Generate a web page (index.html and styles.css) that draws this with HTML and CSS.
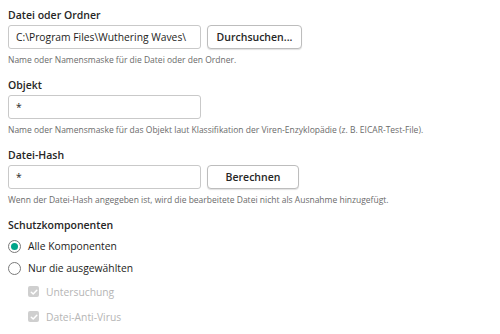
FILE: index.html
```html
<!DOCTYPE html>
<html lang="de">

<head>
    <meta charset="UTF-8">
    <meta name="viewport" content="width=device-width, initial-scale=1.0">
    <title>Ausnahme</title>
    <link rel="stylesheet" href="styles.css">
</head>

<body>
    <div class="field">
        <label class="field-label">Datei oder Ordner</label>
        <div class="field-row">
            <input class="text-input" type="text" value="C:\Program Files\Wuthering Waves\">
            <button class="btn">Durchsuchen...</button>
        </div>
        <p class="hint">Name oder Namensmaske für die Datei oder den Ordner.</p>
    </div>

    <div class="field">
        <label class="field-label">Objekt</label>
        <div class="field-row">
            <input class="text-input" type="text" value="*">
        </div>
        <p class="hint">Name oder Namensmaske für das Objekt laut Klassifikation der Viren-Enzyklopädie (z. B. EICAR-Test-File).</p>
    </div>

    <div class="field">
        <label class="field-label">Datei-Hash</label>
        <div class="field-row">
            <input class="text-input" type="text" value="*">
            <button class="btn btn-narrow">Berechnen</button>
        </div>
        <p class="hint">Wenn der Datei-Hash angegeben ist, wird die bearbeitete Datei nicht als Ausnahme hinzugefügt.</p>
    </div>

    <div class="components">
        <div class="field-label">Schutzkomponenten</div>
        <label class="option">
            <span class="radio checked"></span>
            Alle Komponenten
        </label>
        <label class="option">
            <span class="radio"></span>
            Nur die ausgewählten
        </label>
        <div class="sub-options">
            <label class="option disabled">
                <span class="checkbox">
                    <svg width="8" height="8" viewBox="0 0 8 8">
                        <path d="M1.3 4.2 L3.2 6 L6.8 2.2" fill="none" stroke="#fff" stroke-width="1.5" stroke-linecap="round" stroke-linejoin="round" />
                    </svg>
                </span>
                Untersuchung
            </label>
            <label class="option disabled">
                <span class="checkbox">
                    <svg width="8" height="8" viewBox="0 0 8 8">
                        <path d="M1.3 4.2 L3.2 6 L6.8 2.2" fill="none" stroke="#fff" stroke-width="1.5" stroke-linecap="round" stroke-linejoin="round" />
                    </svg>
                </span>
                Datei-Anti-Virus
            </label>
        </div>
    </div>
</body>

</html>
```

FILE: styles.css
```css
body {
    font-family: "Open Sans", "Noto Sans", sans-serif;
    background-color: #ffffff;
    color: #1d1d1b;
    margin: 0;
    padding: 8px 8px 0 8px;
}

.field {
    margin-bottom: 12px;
}

.field-label {
    display: block;
    font-size: 10.5px;
    font-weight: 600;
    color: #262626;
    line-height: 14px;
    margin-bottom: 3px;
}

.field-row {
    display: flex;
    gap: 6px;
    align-items: center;
}

.text-input {
    box-sizing: border-box;
    width: 193px;
    height: 24px;
    margin: 0;
    padding: 0 7px;
    border: 1px solid #c9c9c9;
    border-radius: 3px;
    font-family: inherit;
    font-size: 10.3px;
    color: #1d1d1b;
    background: #fff;
    outline: none;
}

.btn {
    box-sizing: border-box;
    height: 24px;
    width: 95px;
    padding: 0;
    border: 1px solid #bdbdbd;
    border-radius: 4px;
    background: #fff;
    font-family: inherit;
    font-size: 10.5px;
    font-weight: 600;
    color: #262626;
    box-shadow: 0 1px 1px rgba(0, 0, 0, 0.12);
}

.btn-narrow {
    width: 92px;
}

.hint {
    margin: 5px 0 0 0;
    font-size: 8.5px;
    line-height: 12px;
    color: #6b6b6b;
}

.components .field-label {
    margin-bottom: 3px;
}

.option {
    display: flex;
    align-items: center;
    gap: 7px;
    font-size: 10.3px;
    color: #1d1d1b;
    height: 22px;
}

.radio {
    box-sizing: border-box;
    width: 13px;
    height: 13px;
    border: 1px solid #7a7a7a;
    border-radius: 50%;
    display: flex;
    align-items: center;
    justify-content: center;
}

.radio.checked::after {
    content: "";
    width: 7px;
    height: 7px;
    border-radius: 50%;
    background-color: #00a58a;
}

.sub-options {
    padding-left: 20px;
}

.sub-options .option {
    height: 25px;
}

.checkbox {
    width: 11px;
    height: 11px;
    border-radius: 2px;
    background-color: #cfcfcf;
    display: flex;
    align-items: center;
    justify-content: center;
}

.option.disabled {
    color: #b5b5b5;
}
```
